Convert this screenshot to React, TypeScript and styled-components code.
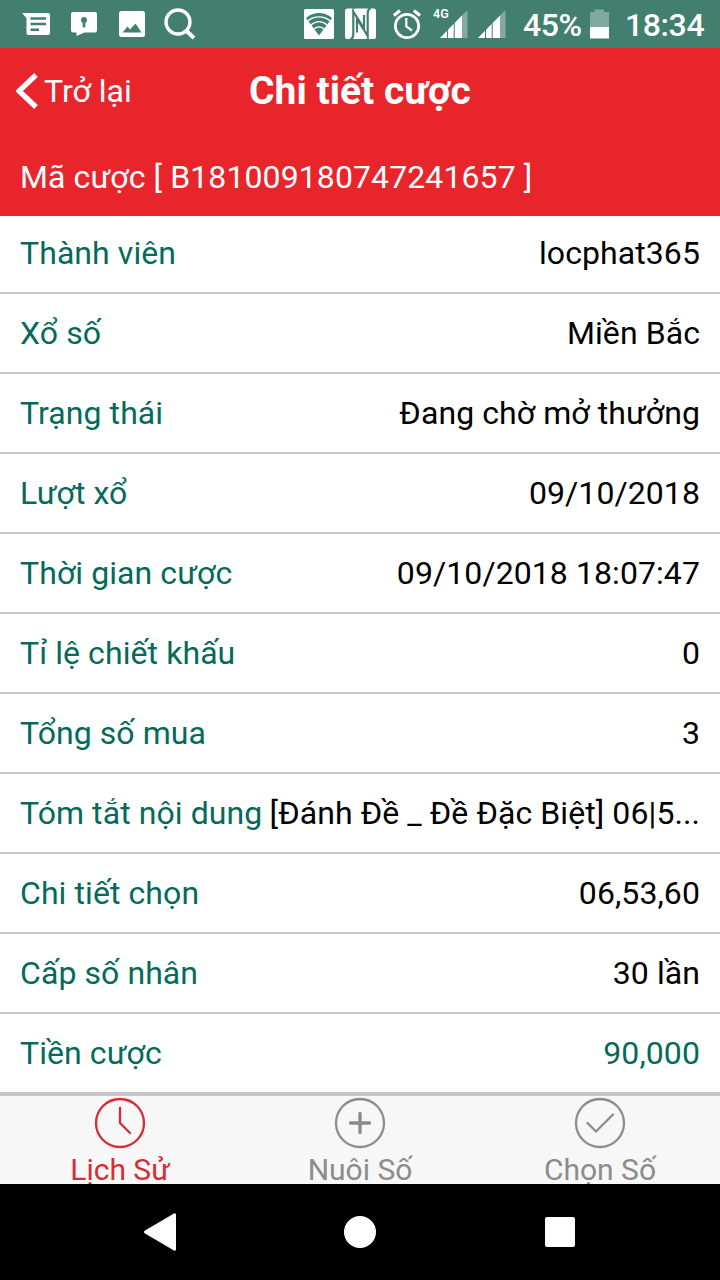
import React from "react";
import styled, { createGlobalStyle } from "styled-components";

const GlobalStyle = createGlobalStyle`
  * { box-sizing: border-box; }
  body { margin: 0; font-family: Roboto, "Liberation Sans", sans-serif; background: #fff; }
`;

const Screen = styled.div`
  width: 720px;
  height: 1280px;
  display: flex;
  flex-direction: column;
  overflow: hidden;
  background: #fff;
  font-size: 32px;
  line-height: 38px;
`;

const StatusBar = styled.div`
  flex: none;
  height: 48px;
  display: flex;
  justify-content: space-between;
  background: #437f6f;
  color: #fff;
  font-weight: 500;
  padding: 0 15px 0 22px;
`;

const StatusGroup = styled.div`
  display: flex;
  align-items: center;
`;

const Glyph = styled.svg<{ $gap?: number }>`
  flex: none;
  display: block;
  margin-left: ${(p) => p.$gap ?? 0}px;
`;

const StatusText = styled.span<{ $gap: number; $width: number }>`
  margin-left: ${(p) => p.$gap}px;
  width: ${(p) => p.$width}px;
  white-space: nowrap;
  letter-spacing: -0.4px;
  padding-top: 1px;
`;

const Header = styled.header`
  flex: none;
  height: 168px;
  background: #e9252c;
  color: #fff;
`;

const NavBar = styled.div`
  height: 88px;
  display: grid;
  grid-template-columns: 200px 1fr 200px;
  align-items: center;
  padding: 0 16px;
`;

const BackButton = styled.div`
  display: flex;
  align-items: center;
  gap: 6px;
  padding-bottom: 2px;
`;

const Title = styled.h1`
  margin: 0;
  text-align: center;
  font-size: 39px;
  line-height: 44px;
  font-weight: 700;
  padding-bottom: 3px;
  white-space: nowrap;
`;

const BetCode = styled.div`
  height: 80px;
  padding: 22px 20px 0;
  letter-spacing: 0.1px;
  white-space: pre;
`;

const List = styled.main`
  flex: none;
  height: 876px;
  display: flex;
  flex-direction: column;
  justify-content: flex-end;
  overflow: hidden;
  letter-spacing: 0.08px;
`;

const Row = styled.div`
  flex: none;
  height: 80px;
  display: flex;
  align-items: center;
  justify-content: space-between;
  padding: 0 20px;
  border-bottom: 2px solid #c8c7cc;
  &:first-child { height: 78px; padding-bottom: 2px; }
  &:last-child { height: 78px; border-bottom: none; }
`;

const Label = styled.span`
  flex: none;
  color: #046a5a;
`;

const Value = styled.span<{ $accent?: boolean }>`
  color: ${(p) => (p.$accent ? "#046a5a" : "#000")};
  white-space: nowrap;
`;

const TabBar = styled.nav`
  flex: none;
  height: 92px;
  display: grid;
  grid-template-columns: repeat(3, 1fr);
  border-top: 4px solid #c6c6ca;
  background: #f7f7f7;
  overflow: hidden;
`;

const Tab = styled.div<{ $active?: boolean }>`
  display: flex;
  flex-direction: column;
  align-items: center;
  padding-top: 1px;
  color: ${(p) => (p.$active ? "#d82c33" : "#8c8c8c")};
`;

const TabLabel = styled.span`
  font-size: 30px;
  line-height: 28px;
  margin-top: 7px;
`;

const SystemNav = styled.div`
  flex: none;
  height: 96px;
  display: flex;
  justify-content: center;
  align-items: center;
  gap: 160px;
  background: #000;
`;

const rows: { label: string; value: string; accent?: boolean }[] = [
  { label: "Thành viên", value: "locphat365" },
  { label: "Xổ số", value: "Miền Bắc" },
  { label: "Trạng thái", value: "Đang chờ mở thưởng" },
  { label: "Lượt xổ", value: "09/10/2018" },
  { label: "Thời gian cược", value: "09/10/2018 18:07:47" },
  { label: "Tỉ lệ chiết khấu", value: "0" },
  { label: "Tổng số mua", value: "3" },
  { label: "Tóm tắt nội dung", value: "[Đánh Đề _ Đề Đặc Biệt] 06|5..." },
  { label: "Chi tiết chọn", value: "06,53,60" },
  { label: "Cấp số nhân", value: "30 lần" },
  { label: "Tiền cược", value: "90,000", accent: true },
];

const BG = "#437f6f";

const Signal = ({ gap }: { gap: number }) => (
  <Glyph $gap={gap} width="28" height="48" viewBox="0 0 28 48">
    <path d="M0 38 27.500 10V38Z" fill="#fff" fillOpacity=".35" />
    <path d="M0 38 22 15.600V38Z" fill="#fff" />
    <path d="M7.500 28V38M14.200 22V38" stroke={BG} strokeWidth="1" />
  </Glyph>
);

const tabs = [
  { label: "Lịch Sử", icon: <path d="M26 12v15l10 10" />, active: true },
  { label: "Nuôi Số", icon: <path d="M26 17.500v19M16.500 27h19" strokeWidth="3.400" /> },
  { label: "Chọn Số", icon: <path d="M13.500 27l8.500 8.500L39 18.500" /> },
];

export default function App() {
  return (
    <Screen>
      <GlobalStyle />
      <StatusBar>
        <StatusGroup>
          <Glyph width="28" height="48" viewBox="0 0 28 48">
            <path d="M0 13H26Q28 13 28 15V33Q28 35 26 35H6.500Q4.500 35 4.500 33V18Z" fill="#fff" />
            <path d="M8.500 18.500H24M8.500 24H24M8.500 29.700H17" stroke={BG} strokeWidth="2.400" />
          </Glyph>
          <Glyph $gap={21} width="26" height="48" viewBox="0 0 26 48">
            <path d="M2 12H24Q26 12 26 14V30.500Q26 32.500 24 32.500H13.500L5.500 36V32.500H2Q0 32.500 0 30.500V14Q0 12 2 12Z" fill="#fff" />
            <circle cx="13" cy="20" r="3" fill={BG} />
            <path d="M13 20V27.300" stroke={BG} strokeWidth="2.600" />
          </Glyph>
          <Glyph $gap={22} width="26" height="48" viewBox="0 0 26 48">
            <rect y="11" width="26" height="26" rx="2.500" fill="#fff" />
            <path d="M3.500 32.500 8.500 26.500 11 29.500 16.500 23.500 22.500 32.500Z" fill={BG} />
          </Glyph>
          <Glyph $gap={19} width="32" height="48" viewBox="0 0 32 48">
            <circle cx="14" cy="22" r="12" fill="none" stroke="#fff" strokeWidth="3.300" />
            <path d="M22 30.500 30 38" stroke="#fff" strokeWidth="4" />
          </Glyph>
        </StatusGroup>
        <StatusGroup>
          <Glyph width="30" height="48" viewBox="0 0 30 48">
            <rect y="9" width="30" height="30" rx="1.500" fill="#fff" />
            <path d="M2 18C9.500 11.300 20.500 11.300 28 18L15 35.500Z" fill={BG} />
            <path d="M4 20.800C10 15.500 20 15.500 26 20.800M7 25C12 20.500 18 20.500 23 25M10 29C13.500 26 16.500 26 20 29" fill="none" stroke="#fff" strokeWidth="1.400" />
          </Glyph>
          <Glyph $gap={11} width="31" height="48" viewBox="0 0 31 48">
            <rect y="8.500" width="31" height="30.500" rx="2.500" fill="#fff" />
            <path d="M5.500 39.500Q8.300 38 8.300 34V11.500L19 28.500V15" fill="none" stroke={BG} strokeWidth="2.200" />
            <path d="M25.500 8Q22.700 9.500 22.700 13.500V36L12 19V32.500" fill="none" stroke={BG} strokeWidth="2.200" />
            <path d="M8.300 13V9.500Q8.300 8.500 10 8M22.700 34.500V38Q22.700 39 21 39.500" fill="none" stroke={BG} strokeWidth="1" />
          </Glyph>
          <Glyph $gap={17} width="28" height="48" viewBox="0 0 28 48">
            <circle cx="14" cy="26" r="11.700" fill="none" stroke="#fff" strokeWidth="2.700" />
            <path d="M13.300 18V26.500L19 30.500" fill="none" stroke="#fff" strokeWidth="2.200" />
            <path d="M.900 15.500 7 10.500M20.800 10.500 27 15.500" stroke="#fff" strokeWidth="3.200" />
          </Glyph>
          <Glyph $gap={12} width="20" height="48" viewBox="0 0 20 48">
            <text x="0" y="18" fill="#fff" fontSize="12.500" fontWeight="600">4G</text>
          </Glyph>
          <Signal gap={-13} />
          <Signal gap={10} />
          <StatusText $gap={17} $width={67}>45%</StatusText>
          <Glyph width="19" height="48" viewBox="0 0 19 48">
            <path d="M0 12H4.500V9.500H14V12H19V27H0Z" fill="#fff" fillOpacity=".33" />
            <path d="M0 27H19V38.500H0Z" fill="#fff" />
          </Glyph>
          <StatusText $gap={16} $width={80}>18:34</StatusText>
        </StatusGroup>
      </StatusBar>
      <Header>
        <NavBar>
          <BackButton>
            <Glyph width="22" height="36" viewBox="0 0 22 36">
              <path d="M20 2 3 18 20 34" fill="none" stroke="#fff" strokeWidth="5.200" />
            </Glyph>
            Trở lại
          </BackButton>
          <Title>Chi tiết cược</Title>
        </NavBar>
        <BetCode>Mã cược [ B181009180747241657 ]</BetCode>
      </Header>
      <List>
        {rows.map((r) => (
          <Row key={r.label}>
            <Label>{r.label}</Label>
            <Value $accent={r.accent}>{r.value}</Value>
          </Row>
        ))}
      </List>
      <TabBar>
        {tabs.map((t) => (
          <Tab key={t.label} $active={t.active}>
            <Glyph width="52" height="52" viewBox="0 1 52 52" fill="none" stroke="currentColor" strokeWidth="2.300" strokeLinecap="round" strokeLinejoin="round">
              <circle cx="26" cy="27" r="24" />
              {t.icon}
            </Glyph>
            <TabLabel>{t.label}</TabLabel>
          </Tab>
        ))}
      </TabBar>
      <SystemNav>
        <Glyph width="48" height="48" viewBox="0 0 48 48" fill="#fff">
          <path d="M38 5.500Q40 4.500 40 7V41Q40 43.500 38 42.500L9 25.500Q7 24 9 22.500Z" />
        </Glyph>
        <Glyph width="32" height="32" viewBox="0 0 32 32" fill="#fff">
          <circle cx="16" cy="16" r="16" />
        </Glyph>
        <Glyph width="48" height="48" viewBox="0 0 48 48" fill="#fff">
          <rect x="9" y="9" width="30" height="30" rx="2" />
        </Glyph>
      </SystemNav>
    </Screen>
  );
}
